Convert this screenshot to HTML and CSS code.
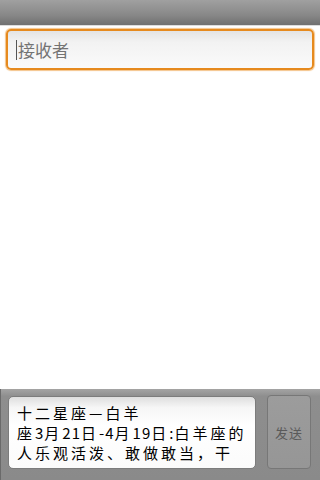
FILE: index.html
```html
<!DOCTYPE html>
<html>
<head>
<meta charset="utf-8">
<link rel="stylesheet" href="styles.css">
</head>
<body>
<div class="screen">
  <div class="titlebar"></div>
  <div class="content">
    <div class="recipient">
      <span class="cursor"></span><span class="placeholder">接收者</span>
    </div>
  </div>
  <div class="composer">
    <div class="message">
      <div class="line">十二星座—白羊</div>
      <div class="line">座<span class="num">3</span>月<span class="num">21</span>日<span class="num">-4</span>月<span class="num">19</span>日<span class="num">:</span>白羊座的</div>
      <div class="line">人乐观活泼、敢做敢当，干</div>
    </div>
    <div class="send">发送</div>
  </div>
</div>
</body>
</html>
```
FILE: styles.css
```css
html, body {
  margin: 0;
  padding: 0;
  background: #ffffff;
}
.screen {
  width: 320px;
  height: 480px;
  display: flex;
  flex-direction: column;
  font-family: "Noto Sans CJK SC", "DejaVu Sans", sans-serif;
  overflow: hidden;
}
.titlebar {
  height: 25px;
  flex: none;
  background: linear-gradient(#a0a0a0, #888888 60%, #707070);
  border-bottom: 1px solid #dcdcdc;
}
.content {
  flex: 1;
  background: #ffffff;
  padding: 3px 6px 0 6px;
}
.recipient {
  height: 37px;
  border: 2px solid #e68a1e;
  border-radius: 5px;
  box-shadow: 0 0 1px 1px #f4c48a;
  background: linear-gradient(#e4e4e4, #f2f2f2 30%, #fafafa);
  display: flex;
  align-items: center;
  padding-left: 8px;
}
.cursor {
  width: 1px;
  height: 20px;
  background: #555;
  margin-right: 1px;
}
.placeholder {
  font-size: 17px;
  color: #737373;
  line-height: 1;
  margin-top: -1px;
}
.composer {
  height: 91px;
  box-sizing: border-box;
  flex: none;
  background: linear-gradient(#a4a4a4, #8e8e8e 8%, #8a8a8a);
  border-left: 1px solid #6a6a6a;
  display: flex;
  align-items: flex-start;
  padding: 6px 9px 0 7px;
  gap: 11px;
}
.message {
  width: 248px;
  height: 73px;
  box-sizing: border-box;
  border: 1px solid #7c7c7c;
  border-radius: 5px;
  background: linear-gradient(#dedede, #f6f6f6 15%, #ffffff 40%, #fbfbfb);
  padding: 6px 0 0 8px;
  overflow: hidden;
  margin-top: 1px;
}
.line {
  font-size: 15px;
  letter-spacing: 3px;
  line-height: 20px;
  color: #000;
  white-space: nowrap;
}
.num {
  letter-spacing: 1px;
}
.send {
  width: 44px;
  height: 74px;
  box-sizing: border-box;
  border: 1px solid #777;
  border-radius: 4px;
  background: linear-gradient(#9c9c9c, #969696);
  display: flex;
  align-items: center;
  justify-content: center;
  font-size: 13px;
  letter-spacing: 1px;
  color: #5a5a5a;
}
```
